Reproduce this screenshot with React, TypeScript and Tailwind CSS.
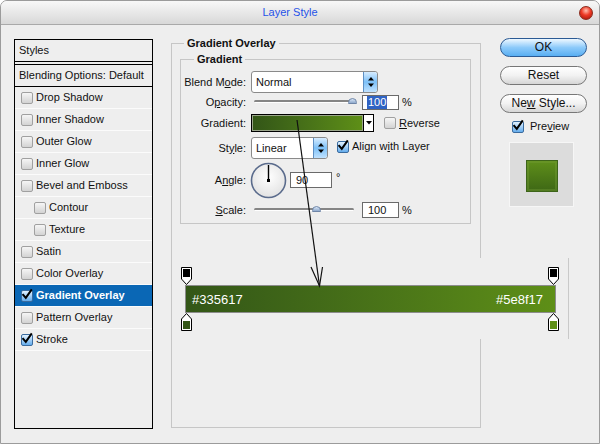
import React from "react";

function Check({ checked = false, className = "" }: { checked?: boolean; className?: string }) {
  if (checked) {
    return (
      <span
        className={
          "flex w-[12px] h-[12px] shrink-0 rounded-[2px] border border-[#3a6b9e] bg-linear-to-b from-[#e2f2ff] to-[#63acec] " +
          className
        }
      >
        <svg viewBox="0 0 12 12" width="12" height="12" className="mt-[-2px] ml-[-1px] overflow-visible">
          <path d="M2.2 5.8 L4.8 8.8 L10.2 1.2" stroke="#000" strokeWidth="2" fill="none" strokeLinecap="square" />
        </svg>
      </span>
    );
  }
  return (
    <span
      className={
        "block w-[12px] h-[12px] shrink-0 rounded-[2px] border border-[#a0a0a0] bg-linear-to-b from-[#f6f6f6] to-[#d3d3d3] " +
        className
      }
    />
  );
}

function Spinner({ h }: { h: number }) {
  return (
    <div
      className="w-[14px] h-full rounded-r-[2px] border-l border-[#5d8fc4] bg-linear-to-b from-[#d6ecff] via-[#7cc0f7] to-[#bfe2ff] flex flex-col items-center justify-center"
      style={{ height: h }}
    >
      <svg width="8" height="12" viewBox="0 0 8 12">
        <path d="M4 1 L7 4.5 H1 Z" fill="#000" />
        <path d="M4 11 L7 7.5 H1 Z" fill="#000" />
      </svg>
    </div>
  );
}

function Select({ value, w }: { value: string; w: string }) {
  return (
    <div className={"h-[22px] rounded-[3px] border border-[#8a8a8a] bg-white flex items-center overflow-hidden " + w}>
      <span className="flex-1 pl-[4px] text-[11px]">{value}</span>
      <Spinner h={20} />
    </div>
  );
}

function Slider({ pos }: { pos: number }) {
  return (
    <div className="relative h-[4px] w-full">
      <div className="h-[3px] w-full rounded-full bg-[#858585] border-b border-white" />
      <div
        className="absolute top-[-2px] w-[9px] h-[6px] rounded-t-full rounded-b-[2px] border border-[#6f86a8] bg-linear-to-b from-[#d8e6f6] to-[#8fa9cc]"
        style={{ left: pos - 4 }}
      />
    </div>
  );
}

function Label({ children }: { children: React.ReactNode }) {
  return <span className="w-[65px] shrink-0 text-right text-[11px]">{children}</span>;
}

function TopStop() {
  return (
    <svg width="11" height="18" viewBox="0 0 11 18">
      <path d="M0.5 0.5 H10.5 V12 L5.5 17.5 L0.5 12 Z" fill="#fff" stroke="#000" />
      <rect x="2" y="2" width="7" height="8" fill="#000" />
    </svg>
  );
}

function BottomStop({ color }: { color: string }) {
  return (
    <svg width="11" height="18" viewBox="0 0 11 18">
      <path d="M5.5 0.5 L10.5 6 V17.5 H0.5 V6 Z" fill="#fff" stroke="#000" />
      <rect x="2" y="8" width="7" height="8" fill={color} />
    </svg>
  );
}

const items: { label: string; indent?: boolean; checked?: boolean; selected?: boolean }[] = [
  { label: "Drop Shadow" },
  { label: "Inner Shadow" },
  { label: "Outer Glow" },
  { label: "Inner Glow" },
  { label: "Bevel and Emboss" },
  { label: "Contour", indent: true },
  { label: "Texture", indent: true },
  { label: "Satin" },
  { label: "Color Overlay" },
  { label: "Gradient Overlay", checked: true, selected: true },
  { label: "Pattern Overlay" },
  { label: "Stroke", checked: true },
];

export default function App() {
  return (
    <div className="relative w-[600px] h-[444px] bg-white font-['Liberation_Sans',Arial,sans-serif] text-[11px] text-[#111] leading-[13px]">
      <div className="w-full h-full rounded-t-[7px] border border-[#9b9b9b] bg-[#eeeeee] flex flex-col overflow-hidden">
        {/* Title bar */}
        <div className="h-[24px] shrink-0 border-b border-[#a9a9a9] bg-linear-to-b from-[#f8f8f8] to-[#d8d8d8] flex items-center">
          <span className="flex-1 text-center text-[11px] text-[#1f52e8]">Layer Style</span>
          <span className="mr-[6px] w-[14px] h-[14px] rounded-full border border-[#8a2a1c] bg-[radial-gradient(circle_at_50%_30%,#ffc0b0_0%,#ee3a26_45%,#9c1208_100%)]" />
        </div>

        {/* Body */}
        <div className="flex pt-[14px] pl-[13px]">
          {/* Left list */}
          <div className="w-[139px] h-[390px] border border-black bg-[#eeeeee] flex flex-col">
            <div className="h-[22px] shrink-0 flex items-center pl-[4px] border-b border-black">Styles</div>
            <div className="h-[2px] shrink-0" />
            <div className="h-[23px] shrink-0 flex items-center pl-[4px] border-t border-b border-black">Blending Options: Default</div>
            {items.map((it) => (
              <div
                key={it.label}
                className={
                  "h-[22px] shrink-0 flex items-center border-b border-[#fbfbfb] " +
                  (it.indent ? "pl-[19px] " : "pl-[6px] ") +
                  (it.selected ? "bg-[#0a67b5] text-white font-bold" : "")
                }
              >
                <Check checked={it.checked} />
                <span className="ml-[3px]">{it.label}</span>
              </div>
            ))}
          </div>

          {/* Middle */}
          <fieldset className="ml-[18px] mt-[-2px] w-[310px] h-[391px] border border-[#c6c6c6]">
            <legend className="ml-[12px] px-[3px] font-bold leading-[13px]">Gradient Overlay</legend>
            <fieldset className="mt-[3px] ml-[8px] w-[291px] border border-[#c6c6c6] pt-[5px] pb-[5px]">
              <legend className="ml-[13px] px-[3px] font-bold leading-[13px]">Gradient</legend>

              <div className="h-[22px] flex items-center">
                <Label>
                  Blend M<u className="underline-offset-1">o</u>de:
                </Label>
                <div className="ml-[5px]">
                  <Select value="Normal" w="w-[127px]" />
                </div>
              </div>

              <div className="mt-[1px] h-[16px] flex items-center">
                <Label>
                  O<u className="underline-offset-1">p</u>acity:
                </Label>
                <div className="ml-[8px] w-[102px]">
                  <Slider pos={98} />
                </div>
                <div className="ml-[6px] w-[37px] h-[15px] border border-[#6a6a6a] bg-white flex items-center pl-[4px]">
                  <span className="bg-[#2f63c4] text-white px-[1px]">100</span>
                </div>
                <span className="ml-[3px]">%</span>
              </div>

              <div className="mt-[4px] h-[18px] flex items-center">
                <Label>Gradient:</Label>
                <div className="ml-[5px] w-[123px] h-[18px] border border-black flex">
                  <div className="flex-1 border border-[#9aa58a] bg-linear-to-r from-[#335617] to-[#5e8f17]" />
                  <div className="w-[10px] border-l border-black bg-white flex items-center justify-center">
                    <svg width="6" height="4" viewBox="0 0 6 4">
                      <path d="M0 0 H6 L3 3.5 Z" fill="#000" />
                    </svg>
                  </div>
                </div>
                <Check className="ml-[10px]" />
                <span className="ml-[3px]">
                  <u className="underline-offset-1">R</u>everse
                </span>
              </div>

              <div className="mt-[5px] h-[22px] flex items-center">
                <Label>
                  St<u className="underline-offset-1">y</u>le:
                </Label>
                <div className="ml-[5px]">
                  <Select value="Linear" w="w-[77px]" />
                </div>
                <Check checked className="ml-[9px] mt-[-2px]" />
                <span className="ml-[3px] mt-[-3px]">
                  Align w<u className="underline-offset-1">i</u>th Layer
                </span>
              </div>

              <div className="mt-[3px] h-[36px] flex items-center">
                <Label>
                  A<u className="underline-offset-1">n</u>gle:
                </Label>
                <svg width="37" height="37" viewBox="0 0 37 37" className="ml-[4px]">
                  <defs>
                    <radialGradient id="dialg" cx="50%" cy="40%" r="60%">
                      <stop offset="0%" stopColor="#ffffff" />
                      <stop offset="100%" stopColor="#e2e2e2" />
                    </radialGradient>
                  </defs>
                  <circle cx="18.5" cy="18.5" r="17" fill="url(#dialg)" stroke="#5a6b8c" strokeWidth="1.6" />
                  <line x1="18.5" y1="3" x2="18.5" y2="18.5" stroke="#000" strokeWidth="1.4" />
                  <rect x="17" y="17" width="3" height="3" fill="#000" />
                </svg>
                <div className="ml-[3px] w-[42px] h-[16px] border border-[#6a6a6a] bg-white flex items-center pl-[5px]">90</div>
                <span className="ml-[4px] self-start mt-[9px]">°</span>
              </div>

              <div className="mt-[4px] h-[16px] flex items-center">
                <Label>
                  <u className="underline-offset-1">S</u>cale:
                </Label>
                <div className="ml-[8px] w-[100px]">
                  <Slider pos={62} />
                </div>
                <div className="ml-[8px] w-[37px] h-[16px] border border-[#6a6a6a] bg-white flex items-center pl-[5px]">100</div>
                <span className="ml-[3px]">%</span>
              </div>
            </fieldset>
          </fieldset>

          {/* Right */}
          <div className="ml-[19px] mt-[-1px] w-[87px] flex flex-col">
            <button className="h-[19px] rounded-full border border-[#2b5a94] bg-linear-to-b from-[#eef8ff] via-[#8ccafa] to-[#58aef2] flex items-center justify-center text-[12px] text-[#111]">
              OK
            </button>
            <button className="mt-[9px] h-[19px] rounded-full border border-[#777777] bg-linear-to-b from-[#ffffff] via-[#f2f2f2] to-[#d6d6d6] flex items-center justify-center text-[12px] text-[#111]">
              Reset
            </button>
            <button className="mt-[9px] h-[19px] rounded-full border border-[#777777] bg-linear-to-b from-[#ffffff] via-[#f2f2f2] to-[#d6d6d6] flex items-center justify-center text-[12px] text-[#111]">
              Ne<u className="underline-offset-1">w</u>&nbsp;Style...
            </button>
            <div className="mt-[7px] ml-[12px] h-[13px] flex items-center">
              <Check checked />
              <span className="ml-[6px]">
                Pre<u className="underline-offset-1">v</u>iew
              </span>
            </div>
            <div className="mt-[9px] ml-[9px] w-[65px] h-[65px] bg-[#dcdcdc] border border-[#f6f6f6] flex">
              <div className="ml-[16px] mt-[17px] w-[32px] h-[32px] border border-[#3d6419] bg-linear-to-b from-[#5f8f1a] to-[#3e6815] shadow-[inset_0_0_0_2px_rgba(120,160,60,0.35)]" />
            </div>
          </div>
        </div>
      </div>

      {/* Pasted gradient editor excerpt */}
      <div className="absolute left-[176px] top-[258px] w-[393px] h-[81px] bg-[#eeeeee] border-r border-[#c9c9c9] flex flex-col pt-[9px]">
        <div className="h-[18px] flex justify-between pl-[5px] pr-[9px]">
          <TopStop />
          <TopStop />
        </div>
        <div className="ml-[9px] w-[371px] h-[28px] border border-[#8c8c8c] bg-linear-to-r from-[#335617] to-[#5e8f17] flex items-center justify-between pl-[6px] pr-[12px] text-white text-[13px] font-['Liberation_Sans',Arial,sans-serif]">
          <span>#335617</span>
          <span>#5e8f17</span>
        </div>
        <div className="h-[18px] flex justify-between pl-[5px] pr-[9px]">
          <BottomStop color="#335617" />
          <BottomStop color="#5e8f17" />
        </div>
      </div>

      {/* Arrow annotation */}
      <svg className="absolute left-0 top-0 pointer-events-none" width="600" height="444" viewBox="0 0 600 444">
        <line x1="297" y1="120" x2="319.5" y2="286" stroke="#111" strokeWidth="1.2" />
        <polyline points="311,267 319.5,286 322.5,267" fill="none" stroke="#111" strokeWidth="1.2" />
      </svg>
    </div>
  );
}
